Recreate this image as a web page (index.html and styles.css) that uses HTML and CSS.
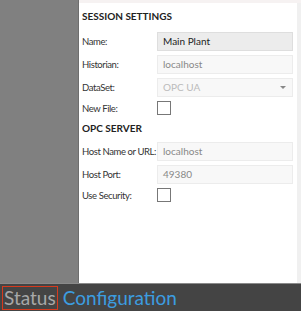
FILE: index.html
```html
<!DOCTYPE html>
<html lang="en">
<head>
    <meta charset="UTF-8">
    <title>Settings</title>
    <link rel="stylesheet" href="styles.css">
</head>
<body>
    <div class="app">
        <div class="main">
            <div class="sidebar"></div>
            <div class="panel">
                <div class="content">
                    <h2>SESSION SETTINGS</h2>
                    <div class="row">
                        <label>Name:</label>
                        <div class="field active">Main Plant</div>
                    </div>
                    <div class="row">
                        <label>Historian:</label>
                        <div class="field">localhost</div>
                    </div>
                    <div class="row">
                        <label>DataSet:</label>
                        <div class="field select">OPC UA<span class="arrow"></span></div>
                    </div>
                    <div class="row short">
                        <label>New File:</label>
                        <div class="check"></div>
                    </div>

                    <h2>OPC SERVER</h2>
                    <div class="row">
                        <label>Host Name or URL:</label>
                        <div class="field">localhost</div>
                    </div>
                    <div class="row">
                        <label>Host Port:</label>
                        <div class="field">49380</div>
                    </div>
                    <div class="row short">
                        <label>Use Security:</label>
                        <div class="check"></div>
                    </div>
                </div>
                <div class="scrollbar"></div>
            </div>
        </div>
        <div class="tabs">
            <span class="tab current">Status</span>
            <span class="tab link">Configuration</span>
        </div>
    </div>
</body>
</html>
```

FILE: styles.css
```css
body {
    margin: 0;
    font-family: Lato, "Noto Sans", sans-serif;
    font-size: 10px;
    color: #333;
}

.app {
    display: flex;
    flex-direction: column;
    width: 301px;
    height: 311px;
}

.main {
    display: flex;
    flex: 1;
    min-height: 0;
}

.sidebar {
    width: 78px;
    background-color: #808080;
    border-right: 1px solid #6e6e6e;
}

.panel {
    flex: 1;
    display: flex;
    background-color: #fff;
    border-top: 3px solid #f6f2f2;
}

.content {
    flex: 1;
    padding: 6px 4px 0 3px;
}

.scrollbar {
    width: 4px;
    background-color: #f0f0f0;
}

h2 {
    margin: 0 0 9px;
    line-height: 14px;
    font-size: 10px;
    font-weight: bold;
    color: #222;
}

.short + h2 {
    margin-bottom: 7px;
}

.row {
    display: flex;
    align-items: center;
    height: 19px;
    margin-bottom: 4px;
}

.row.short {
    height: 14px;
    margin-bottom: 6px;
}

label {
    width: 75px;
    flex-shrink: 0;
    white-space: nowrap;
    font-size: 9.5px;
    letter-spacing: -0.4px;
    color: #333;
}

.field {
    flex: 1;
    height: 17px;
    line-height: 17px;
    padding: 0 5px;
    background-color: #f8f8f8;
    border: 1px solid #ececec;
    color: #888;
    position: relative;
}

.field.active {
    background-color: #ececec;
    border-color: #dedede;
    color: #222;
}

.field.select {
    color: #bbb;
}

.arrow {
    position: absolute;
    right: 6px;
    top: 7px;
    border-left: 3px solid transparent;
    border-right: 3px solid transparent;
    border-top: 3px solid #888;
}

.check {
    width: 12px;
    height: 12px;
    border: 1px solid #777;
}

.tabs {
    height: 27px;
    background-color: #444;
    border-top: 1px solid #8a8a8a;
    display: flex;
    align-items: center;
    padding-left: 2px;
    font-size: 19px;
}

.tab {
    line-height: 22px;
    padding: 0 1px;
}

.tab.current {
    color: #a8a8a8;
    border: 1px solid #d63a1e;
}

.tab.link {
    color: #3c9de0;
    margin-left: 4px;
}
```
